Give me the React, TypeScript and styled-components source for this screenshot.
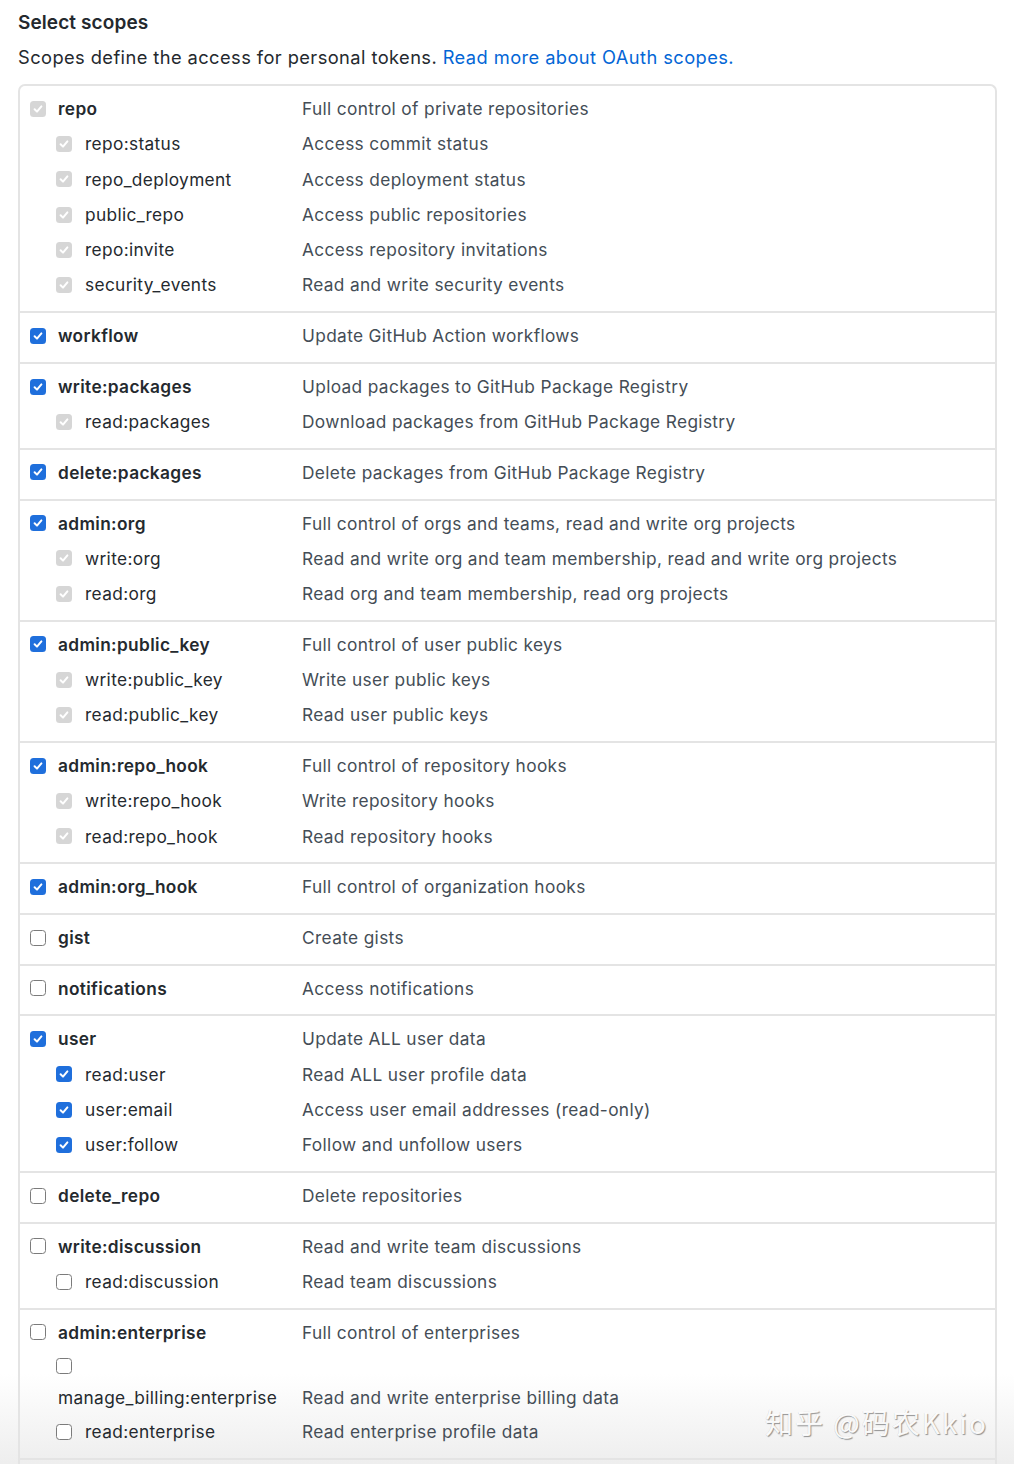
import React from "react";
import styled, { createGlobalStyle } from "styled-components";

const GlobalStyle = createGlobalStyle`
  html, body {
    margin: 0;
    background: #ffffff;
  }
  body {
    font-family: Inter, "Noto Sans", "Liberation Sans", sans-serif;
    color: #24292e;
    -webkit-font-smoothing: antialiased;
  }
`;

type Mark = "checked" | "disabled" | "empty";

interface Scope {
  name: string;
  desc: string;
  mark: Mark;
  wrap?: boolean;
}

interface ScopeGroup {
  parent: Scope;
  children?: Scope[];
}

const groups: ScopeGroup[] = [
  {
    parent: { name: "repo", desc: "Full control of private repositories", mark: "disabled" },
    children: [
      { name: "repo:status", desc: "Access commit status", mark: "disabled" },
      { name: "repo_deployment", desc: "Access deployment status", mark: "disabled" },
      { name: "public_repo", desc: "Access public repositories", mark: "disabled" },
      { name: "repo:invite", desc: "Access repository invitations", mark: "disabled" },
      { name: "security_events", desc: "Read and write security events", mark: "disabled" },
    ],
  },
  { parent: { name: "workflow", desc: "Update GitHub Action workflows", mark: "checked" } },
  {
    parent: { name: "write:packages", desc: "Upload packages to GitHub Package Registry", mark: "checked" },
    children: [
      { name: "read:packages", desc: "Download packages from GitHub Package Registry", mark: "disabled" },
    ],
  },
  { parent: { name: "delete:packages", desc: "Delete packages from GitHub Package Registry", mark: "checked" } },
  {
    parent: { name: "admin:org", desc: "Full control of orgs and teams, read and write org projects", mark: "checked" },
    children: [
      { name: "write:org", desc: "Read and write org and team membership, read and write org projects", mark: "disabled" },
      { name: "read:org", desc: "Read org and team membership, read org projects", mark: "disabled" },
    ],
  },
  {
    parent: { name: "admin:public_key", desc: "Full control of user public keys", mark: "checked" },
    children: [
      { name: "write:public_key", desc: "Write user public keys", mark: "disabled" },
      { name: "read:public_key", desc: "Read user public keys", mark: "disabled" },
    ],
  },
  {
    parent: { name: "admin:repo_hook", desc: "Full control of repository hooks", mark: "checked" },
    children: [
      { name: "write:repo_hook", desc: "Write repository hooks", mark: "disabled" },
      { name: "read:repo_hook", desc: "Read repository hooks", mark: "disabled" },
    ],
  },
  { parent: { name: "admin:org_hook", desc: "Full control of organization hooks", mark: "checked" } },
  { parent: { name: "gist", desc: "Create gists", mark: "empty" } },
  { parent: { name: "notifications", desc: "Access notifications", mark: "empty" } },
  {
    parent: { name: "user", desc: "Update ALL user data", mark: "checked" },
    children: [
      { name: "read:user", desc: "Read ALL user profile data", mark: "checked" },
      { name: "user:email", desc: "Access user email addresses (read-only)", mark: "checked" },
      { name: "user:follow", desc: "Follow and unfollow users", mark: "checked" },
    ],
  },
  { parent: { name: "delete_repo", desc: "Delete repositories", mark: "empty" } },
  {
    parent: { name: "write:discussion", desc: "Read and write team discussions", mark: "empty" },
    children: [{ name: "read:discussion", desc: "Read team discussions", mark: "empty" }],
  },
  {
    parent: { name: "admin:enterprise", desc: "Full control of enterprises", mark: "empty" },
    children: [
      { name: "manage_billing:enterprise", desc: "Read and write enterprise billing data", mark: "empty", wrap: true },
      { name: "read:enterprise", desc: "Read enterprise profile data", mark: "empty" },
    ],
  },
];

const Page = styled.div`
  position: relative;
  height: 1464px;
  box-sizing: border-box;
  overflow: hidden;
`;

const Content = styled.div`
  position: relative;
  z-index: 1;
  padding: 9px 17px 0 18px;
`;

const Title = styled.h3`
  margin: 0;
  font-size: 19px;
  line-height: 28px;
  font-weight: 600;
  letter-spacing: 0.1px;
`;

const Intro = styled.p`
  margin: 6px 0 13px;
  font-size: 18.3px;
  line-height: 28px;
  letter-spacing: 0.42px;
`;

const Link = styled.a`
  color: #0366d6;
  text-decoration: none;
`;

const ScopeBox = styled.div`
  border: 2px solid #e4e4e4;
  border-bottom: 0;
  border-radius: 7px 7px 0 0;
  padding-bottom: 40px;
`;

const Group = styled.div`
  padding: 5px 0 8.4px;
  border-bottom: 2px solid #e4e4e4;
`;

const Row = styled.div<{ $wrap?: boolean }>`
  display: grid;
  grid-template-columns: 282px 1fr;
  align-items: ${(p) => (p.$wrap ? "end" : "center")};
  min-height: 35.3px;
  font-size: 17.3px;
  letter-spacing: 0.35px;
`;

const LabelCell = styled.div<{ $child?: boolean; $wrap?: boolean }>`
  display: flex;
  flex-direction: ${(p) => (p.$wrap ? "column" : "row")};
  align-items: ${(p) => (p.$wrap ? "flex-start" : "center")};
  padding-left: ${(p) => (p.$child ? "36px" : "10px")};
`;

const Name = styled.span<{ $bold?: boolean; $wrap?: boolean }>`
  font-weight: ${(p) => (p.$bold ? 600 : 400)};
  line-height: ${(p) => (p.$wrap ? "32px" : "35.3px")};
  color: #24292e;
  white-space: nowrap;
  margin-left: ${(p) => (p.$wrap ? "2px" : "0")};
`;

const CheckHolder = styled.span<{ $child?: boolean; $wrap?: boolean }>`
  display: inline-flex;
  align-items: center;
  height: ${(p) => (p.$wrap ? "32px" : "35.3px")};
  margin-right: ${(p) => (p.$child ? "13px" : "12px")};
`;

const Box = styled.span<{ $mark: Mark }>`
  display: inline-flex;
  align-items: center;
  justify-content: center;
  width: 16px;
  height: 16px;
  box-sizing: border-box;
  border-radius: 3.5px;
  background: ${(p) =>
    p.$mark === "checked" ? "#1f6fdc" : p.$mark === "disabled" ? "#d6d6d6" : "#ffffff"};
  border: ${(p) => (p.$mark === "empty" ? "1.5px solid #7b7b7b" : "none")};
`;

const Desc = styled.div<{ $wrap?: boolean }>`
  color: #444d56;
  line-height: ${(p) => (p.$wrap ? "32px" : "35.3px")};
  white-space: nowrap;
`;

const Watermark = styled.div`
  position: absolute;
  z-index: 2;
  right: 26px;
  bottom: 28px;
  font-family: "Noto Sans CJK SC", "Noto Sans", sans-serif;
  font-size: 28px;
  line-height: 1;
  letter-spacing: 2px;
  color: rgba(255, 255, 255, 0.95);
  text-shadow: 1px 1px 1px rgba(0, 0, 0, 0.4), -0.5px -0.5px 0 rgba(0, 0, 0, 0.12);
  pointer-events: none;
`;

const BottomShade = styled.div`
  position: absolute;
  z-index: 0;
  left: 0;
  right: 0;
  bottom: 0;
  height: 90px;
  background: linear-gradient(to bottom, rgba(235, 235, 235, 0), rgba(232, 232, 232, 0.75));
  pointer-events: none;
`;

const Checkbox = ({ mark }: { mark: Mark }) => (
  <Box $mark={mark}>
    {mark !== "empty" && (
      <svg width="12" height="12" viewBox="0 0 12 12">
        <path
          d="M2.6 6.3 L5 8.6 L9.4 3.4"
          fill="none"
          stroke="#ffffff"
          strokeWidth="2"
          strokeLinecap="round"
          strokeLinejoin="round"
        />
      </svg>
    )}
  </Box>
);

const ScopeRow = ({ scope, child }: { scope: Scope; child?: boolean }) => (
  <Row $wrap={scope.wrap}>
    <LabelCell $child={child} $wrap={scope.wrap}>
      <CheckHolder $child={child} $wrap={scope.wrap}>
        <Checkbox mark={scope.mark} />
      </CheckHolder>
      <Name $bold={!child} $wrap={scope.wrap}>
        {scope.name}
      </Name>
    </LabelCell>
    <Desc $wrap={scope.wrap}>{scope.desc}</Desc>
  </Row>
);

export default function App() {
  return (
    <>
      <GlobalStyle />
      <Page>
        <BottomShade />
        <Content>
          <Title>Select scopes</Title>
          <Intro>
            Scopes define the access for personal tokens.{" "}
            <Link href="#">Read more about OAuth scopes.</Link>
          </Intro>
          <ScopeBox>
            {groups.map((g) => (
              <Group key={g.parent.name}>
                <ScopeRow scope={g.parent} />
                {g.children?.map((c) => (
                  <ScopeRow key={c.name} scope={c} child />
                ))}
              </Group>
            ))}
          </ScopeBox>
        </Content>
        <Watermark>知乎 @码农Kkio</Watermark>
      </Page>
    </>
  );
}
